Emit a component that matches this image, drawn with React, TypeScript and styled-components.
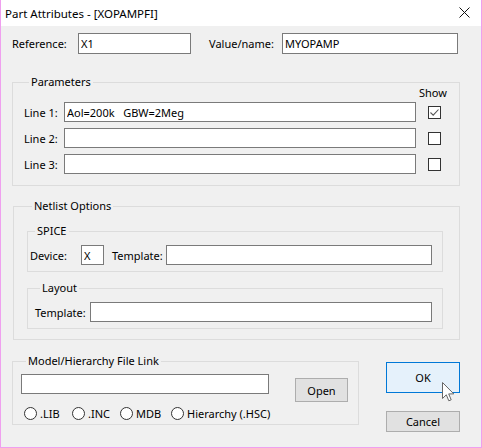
import React from 'react'
import styled, { createGlobalStyle } from 'styled-components'

const Global = createGlobalStyle`
  html, body {
    margin: 0;
    padding: 0;
    background: #f0f0f0;
  }
  body {
    font-family: "Noto Sans", "Liberation Sans", sans-serif;
    font-size: 11px;
    color: #000;
  }
`

const Window = styled.div`
  width: 482px;
  height: 448px;
  box-sizing: border-box;
  border: 1px solid #ef9fef;
  border-top: none;
  background: #f0f0f0;
  display: flex;
  flex-direction: column;
  overflow: hidden;
`

const TitleBar = styled.div`
  height: 26px;
  flex-shrink: 0;
  background: #fff;
  display: flex;
  align-items: center;
  justify-content: space-between;
  padding: 0 11px 0 4px;
  font-size: 11.5px;
`

const Close = styled.svg`
  width: 11px;
  height: 11px;
  margin-top: -2px;
`

const Body = styled.div`
  padding: 7px 21px 0 11px;
  display: flex;
  flex-direction: column;
`

const Row = styled.div<{ $mt?: number; $top?: boolean }>`
  display: flex;
  align-items: ${p => (p.$top ? 'flex-start' : 'center')};
  margin-top: ${p => p.$mt ?? 0}px;
`

const Label = styled.span<{ $w?: number; $ml?: number }>`
  width: ${p => (p.$w ? `${p.$w}px` : 'auto')};
  margin-left: ${p => p.$ml ?? 0}px;
  flex-shrink: 0;
  white-space: nowrap;
`

const Field = styled.input<{ $w: number; $h?: number }>`
  box-sizing: border-box;
  width: ${p => p.$w}px;
  height: ${p => p.$h ?? 20}px;
  margin: 0;
  padding: 0 2px;
  border: 1px solid #7a7a7a;
  background: #fff;
  font: inherit;
  color: #000;
  outline: none;
  flex-shrink: 0;
`

const Group = styled.fieldset<{ $mt?: number; $ml?: number; $pad: string; $w?: number }>`
  margin: ${p => p.$mt ?? 0}px 0 0 ${p => p.$ml ?? 0}px;
  padding: ${p => p.$pad};
  border: 1px solid #dcdcdc;
  min-width: 0;
  ${p => (p.$w ? `width: ${p.$w}px; box-sizing: border-box; flex-shrink: 0;` : '')}
`

const Legend = styled.legend`
  margin-left: 5px;
  padding: 0 2px;
  line-height: 16px;
  height: 16px;
`

const ShowHead = styled.div`
  line-height: 12px;
  height: 12px;
  margin-top: -3px;
  padding-left: 395px;
`

const ParamRow = styled.div<{ $mt: number }>`
  display: flex;
  align-items: center;
  height: 20px;
  margin-top: ${p => p.$mt}px;
`

const Check = styled.span`
  box-sizing: border-box;
  width: 13px;
  height: 13px;
  margin-left: 12px;
  border: 1px solid #333;
  background: #fff;
  display: flex;
  flex-shrink: 0;
`

const Radios = styled.div`
  display: flex;
  align-items: center;
  margin: 5px 0 0 3px;
  height: 13px;
`

const RadioItem = styled.label<{ $w?: number }>`
  display: flex;
  align-items: center;
  gap: 3px;
  width: ${p => (p.$w ? `${p.$w}px` : 'auto')};
  white-space: nowrap;
`

const RadioDot = styled.span`
  box-sizing: border-box;
  width: 13px;
  height: 13px;
  border-radius: 50%;
  border: 1px solid #333;
  background: #fff;
  flex-shrink: 0;
`

const Bottom = styled.div`
  display: flex;
  align-items: flex-start;
  margin-top: 13px;
`

const Buttons = styled.div`
  display: flex;
  flex-direction: column;
  margin: 9px 0 0 27px;
  width: 74px;
`

const Button = styled.button<{ $primary?: boolean; $h: number; $w?: number; $mt?: number; $ml?: number }>`
  position: relative;
  box-sizing: border-box;
  width: ${p => (p.$w ? `${p.$w}px` : '100%')};
  height: ${p => p.$h}px;
  margin: ${p => p.$mt ?? 0}px 0 0 ${p => p.$ml ?? 0}px;
  padding: 0;
  border: 1px solid ${p => (p.$primary ? '#0078d7' : '#adadad')};
  background: ${p => (p.$primary ? '#e5f1fb' : '#e1e1e1')};
  font: inherit;
  color: #000;
  flex-shrink: 0;
`

const Cursor = styled.svg`
  position: absolute;
  left: 55px;
  top: 19px;
  width: 13px;
  height: 20px;
`

const Radio: React.FC<{ label: string; w?: number }> = ({ label, w }) => (
  <RadioItem $w={w}>
    <RadioDot />
    {label}
  </RadioItem>
)

const App: React.FC = () => {
  const lines = ['Aol=200k   GBW=2Meg', '', '']
  return (
    <Window>
      <Global />
      <TitleBar>
        <span>Part Attributes - [XOPAMPFI]</span>
        <Close viewBox="0 0 11 11">
          <path d="M0.5 0.5 L10.5 10.5 M10.5 0.5 L0.5 10.5" stroke="#111" strokeWidth="1" fill="none" />
        </Close>
      </TitleBar>
      <Body>
        <Row>
          <Label $w={66}>Reference:</Label>
          <Field $w={113} $h={21} defaultValue="X1" />
          <Label $w={73} $ml={18}>Value/name:</Label>
          <Field $w={176} $h={21} defaultValue="MYOPAMP" />
        </Row>

        <Group $mt={20} $pad="0 18px 11px 11px">
          <Legend>Parameters</Legend>
          <ShowHead>Show</ShowHead>
          {lines.map((v, i) => (
            <ParamRow key={i} $mt={i === 0 ? 3 : 6}>
              <Label $w={40}>Line {i + 1}:</Label>
              <Field $w={352} defaultValue={v} />
              <Check>
                {i === 0 && (
                  <svg width="11" height="11" viewBox="0 0 11 11">
                    <path d="M1.5 5.5 L4.2 8.2 L9.5 2.5" stroke="#555" strokeWidth="1.1" fill="none" />
                  </svg>
                )}
              </Check>
            </ParamRow>
          ))}
        </Group>

        <Group $mt={12} $ml={1} $pad="9px 16px 10px 13px">
          <Legend>Netlist Options</Legend>
          <Group $pad="6px 10px 6px 2px">
            <Legend>SPICE</Legend>
            <Row>
              <Label $w={51}>Device:</Label>
              <Field $w={23} defaultValue="X" />
              <Label $w={54} $ml={8}>Template:</Label>
              <Field $w={266} defaultValue="" />
            </Row>
          </Group>
          <Group $mt={8} $pad="6px 10px 6px 7px">
            <Legend>Layout</Legend>
            <Row>
              <Label $w={55}>Template:</Label>
              <Field $w={342} defaultValue="" />
            </Row>
          </Group>
        </Group>

        <Bottom>
          <Group $w={347} $pad="5px 8px 4px 8px">
            <Legend>Model/Hierarchy File Link</Legend>
            <Row $top>
              <Field $w={248} defaultValue="" />
              <Button $h={24} $w={53} $mt={4} $ml={26}>Open</Button>
            </Row>
            <Radios>
              <Radio label=".LIB" w={48} />
              <Radio label=".INC" w={48} />
              <Radio label="MDB" w={51} />
              <Radio label="Hierarchy (.HSC)" />
            </Radios>
          </Group>
          <Buttons>
            <Button $primary $h={31}>
              OK
              <Cursor viewBox="0 0 13 20">
                <path
                  d="M0.5 0.5 L0.5 16.5 L4.3 12.8 L6.8 18.8 L9.2 17.8 L6.7 11.9 L11.8 11.9 Z"
                  fill="#fff"
                  stroke="#666"
                  strokeWidth="1"
                  strokeLinejoin="round"
                />
              </Cursor>
            </Button>
            <Button $h={21} $mt={18}>Cancel</Button>
          </Buttons>
        </Bottom>
      </Body>
    </Window>
  )
}

export default App
